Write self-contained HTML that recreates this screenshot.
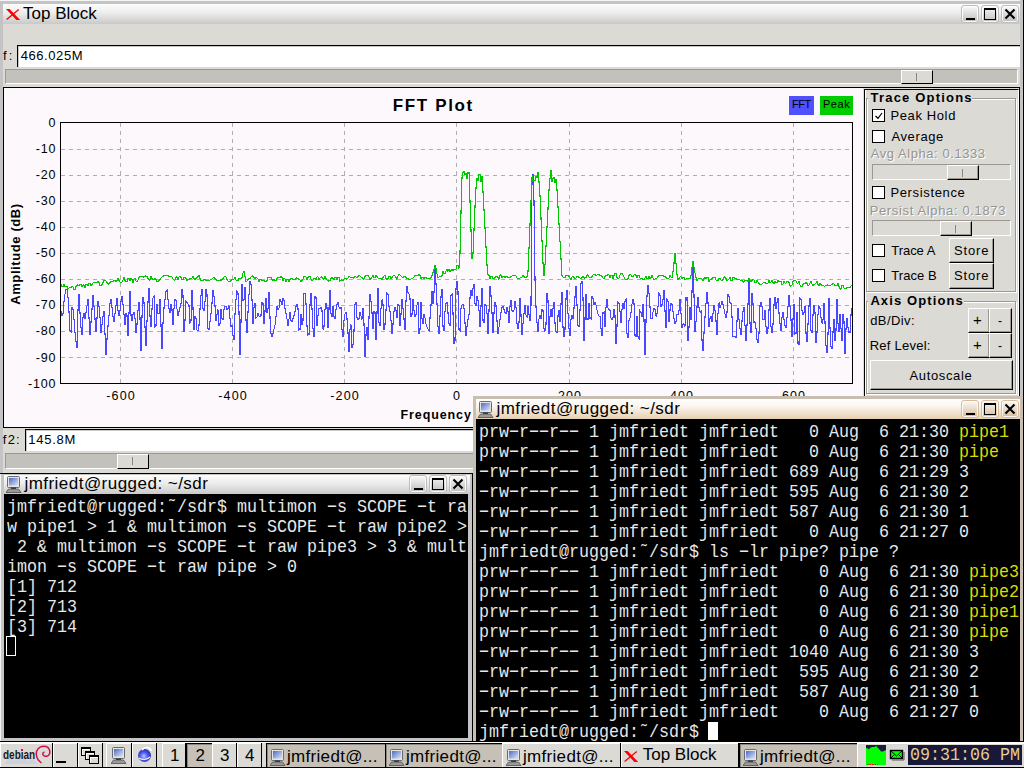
<!DOCTYPE html>
<html><head><meta charset="utf-8">
<style>
*{margin:0;padding:0;box-sizing:border-box}
html,body{width:1024px;height:768px;overflow:hidden;background:#000;font-family:"Liberation Sans",sans-serif}
.a{position:absolute}
.t{position:absolute;white-space:pre;line-height:1;color:#000}
.btn{position:absolute;background:#dcdad5;border:1px solid;border-color:#fff #000 #000 #fff;box-shadow:inset -1px -1px 0 #9a9890}
.chk{position:absolute;width:13px;height:13px;background:#fff;border:1px solid #000}
.grp{position:absolute;border:1px solid #9a9890;box-shadow:inset 1px 1px 0 #fff,1px 1px 0 #fff}
.trough{position:absolute;background:#dcdad5;border:1px solid;border-color:#9a9890 #fff #fff #9a9890}
.tr{position:absolute;background:#c3c1bc;border:1px solid;border-color:#9a9890 #fff #fff #9a9890}
.tl{position:absolute;white-space:pre;line-height:20px;height:20px;color:#e8e8e8;font-family:"Liberation Mono",monospace;font-size:18px;transform:scaleX(0.9259);transform-origin:0 0}
.y{color:#dcdc00}
.wb{position:absolute;border-radius:3px}
</style></head><body>

<div class="a" style="left:0px;top:0px;width:1024px;height:474px;background:#dcdad5"></div>
<div class="a" style="left:0px;top:0px;width:3px;height:474px;background:#c4c4c4"></div>
<div class="a" style="left:0px;top:1px;width:1024px;height:3px;background:#c4c4c4"></div>
<div class="a" style="left:0px;top:0px;width:1024px;height:1px;background:#f4f4f4"></div>
<div class="a" style="left:1020px;top:0px;width:3px;height:474px;background:#c4c4c4"></div>
<div class="a" style="left:1023px;top:0px;width:1px;height:474px;background:#000"></div>
<div class="a" style="left:0px;top:473px;width:1024px;height:1px;background:#000"></div>
<div class="a" style="left:3px;top:4px;width:1017px;height:20px;background:linear-gradient(#fdfdfd,#ececec 45%,#c9c9c9)"></div>
<svg class="a" style="left:5px;top:8px" width="16" height="13"><path d="M1,1 L4.6,1 L15.2,12 L11.4,12 Z" fill="#ff0000"/><path d="M1.6,11.6 L13.8,1.4" stroke="#ff0000" stroke-width="1.3"/></svg>
<div class="t" style="left:23.00px;top:5.21px;font-size:17px;">Top Block</div>
<div class="a" style="left:961px;top:5px;width:18px;height:18px;border:1px solid #bdbdbd;border-radius:3px;background:linear-gradient(#fafafa,#bdbdbd);box-shadow:inset 0 0 0 1px rgba(255,255,255,.85)"></div>
<div class="a" style="left:981px;top:5px;width:18px;height:18px;border:1px solid #bdbdbd;border-radius:3px;background:linear-gradient(#fafafa,#bdbdbd);box-shadow:inset 0 0 0 1px rgba(255,255,255,.85)"></div>
<div class="a" style="left:1001px;top:5px;width:18px;height:18px;border:1px solid #bdbdbd;border-radius:3px;background:linear-gradient(#fafafa,#bdbdbd);box-shadow:inset 0 0 0 1px rgba(255,255,255,.85)"></div>
<div class="a" style="left:966px;top:18px;width:9px;height:2px;background:#000"></div>
<div class="a" style="left:984px;top:8px;width:12px;height:12px;border:1px solid #000;border-top-width:2px"></div>
<svg class="a" style="left:1004px;top:8px" width="12" height="12"><path d="M1.5,1.5 L10.5,10.5 M1.5,10.5 L10.5,1.5" stroke="#000" stroke-width="2.1"/></svg>
<div class="t" style="left:2.92px;top:48.90px;font-size:13px;letter-spacing:2.15px;">f:</div>
<div class="a" style="left:17px;top:45px;width:1003px;height:22px;background:#fff;border-top:1px solid #000;border-left:1px solid #000;box-shadow:inset 1px 1px 0 #c8c8c8"></div>
<div class="t" style="left:20.70px;top:48.90px;font-size:13px;letter-spacing:0.58px;">466.025M</div>
<div class="a" style="left:5px;top:69px;width:1013px;height:15px;background:#c3c1bc;border:1px solid;border-color:#9a9890 #fff #fff #9a9890"></div>
<div class="a" style="left:901px;top:70px;width:32px;height:14px;background:#dcdad5;border:1px solid;border-color:#fff #000 #000 #fff"></div>
<div class="a" style="left:916px;top:73px;width:1px;height:8px;background:#8a8880"></div>
<div class="a" style="left:3px;top:87px;width:1017px;height:341px;background:#dcdad5;border:1px solid #000"></div>
<div class="a" style="left:4px;top:88px;width:859px;height:339px;background:#fcf8fc"></div>
<svg class="a" style="left:0;top:0" width="1024" height="474">
<path d="M61,149.5H852 M61,175.5H852 M61,201.5H852 M61,227.5H852 M61,253.5H852 M61,279.5H852 M61,305.5H852 M61,331.5H852 M61,357.5H852 M120.5,123V383 M232.5,123V383 M344.5,123V383 M456.5,123V383 M569.5,123V383 M681.5,123V383 M793.5,123V383" stroke="#b0b0b0" stroke-width="1" stroke-dasharray="4,4" fill="none" shape-rendering="crispEdges"/>
<path d="M61,310.8 62,315.9 63,313.9 64,301.3 65,294.1 66,289.4 67,289.1 68,297.4 69,311.4 70,330.3 71,331.7 72,306.9 73,309.1 74,319.0 75,332.6 76,341.6 77,347.6 78,309.8 79,294.5 80,312.7 81,327.7 82,335.4 83,317.3 84,313.4 85,319.1 86,312.9 87,306.2 88,298.7 89,317.6 90,335.4 91,322.4 92,308.9 93,294.9 94,306.4 95,318.8 96,332.4 97,317.8 98,301.3 99,305.9 100,317.3 101,333.1 102,324.5 103,316.9 104,310.8 105,333.8 106,354.8 107,338.9 108,326.3 109,315.9 110,303.5 111,299.3 112,307.4 113,316.5 114,322.1 115,313.2 116,305.3 117,298.2 118,310.9 119,316.2 120,310.6 121,301.8 122,295.8 123,304.7 124,314.4 125,324.6 126,313.7 127,315.3 128,335.9 129,313.1 130,291.0 131,315.2 132,321.1 133,314.7 134,312.6 135,317.7 136,333.4 137,324.4 138,310.4 139,301.6 140,317.9 141,351.0 142,316.5 143,297.5 144,301.8 145,326.9 146,346.0 147,321.0 148,302.3 149,288.0 150,316.7 151,326.8 152,309.1 153,297.9 154,296.3 155,326.4 156,325.5 157,303.9 158,313.5 159,313.6 160,299.2 161,325.2 162,348.9 163,323.3 164,308.1 165,299.8 166,291.2 167,289.8 168,299.3 169,308.2 170,313.4 171,303.8 172,309.5 173,325.2 174,308.7 175,299.2 176,300.4 177,308.9 178,316.3 179,311.5 180,307.5 181,304.0 182,289.4 183,295.3 184,331.9 185,320.0 186,301.1 187,302.6 188,304.0 189,305.3 190,322.9 191,321.1 192,290.2 193,308.3 194,329.9 195,316.3 196,318.0 197,330.0 198,331.1 199,325.5 200,309.6 201,295.7 202,289.0 203,308.9 204,311.3 205,301.8 206,288.6 207,294.5 208,329.1 209,329.8 210,322.0 211,313.9 212,303.1 213,290.4 214,296.2 215,305.6 216,320.5 217,314.8 218,309.6 219,326.3 220,323.9 221,308.8 222,318.3 223,319.7 224,309.2 225,306.4 226,306.3 227,309.4 228,308.7 229,305.6 230,318.5 231,326.1 232,325.8 233,335.4 234,339.9 235,314.4 236,299.2 237,291.0 238,293.4 239,311.9 240,354.5 241,321.8 242,283.9 243,300.3 244,299.4 245,287.0 246,320.5 247,332.5 248,312.4 249,294.5 250,281.2 251,283.9 252,299.7 253,324.2 254,307.1 255,302.9 256,318.2 257,316.9 258,313.2 259,316.1 260,316.5 261,315.3 262,302.7 263,303.4 264,323.9 265,311.4 266,297.9 267,313.1 268,309.0 269,292.0 270,317.4 271,333.8 272,336.7 273,333.6 274,329.2 275,325.1 276,316.9 277,306.2 278,309.7 279,308.2 280,299.0 281,301.6 282,304.6 283,298.2 284,300.3 285,308.2 286,313.4 287,319.1 288,325.7 289,318.9 290,312.5 291,320.7 292,321.9 293,318.5 294,315.8 295,311.9 296,306.4 297,304.4 298,307.9 299,329.9 300,329.3 301,313.7 302,324.5 303,320.3 304,293.4 305,293.3 306,303.2 307,325.9 308,335.0 309,334.9 310,305.0 311,293.3 312,309.1 313,328.6 314,337.0 315,296.7 316,297.5 317,325.7 318,315.1 319,308.6 320,308.4 321,307.5 322,310.5 323,329.4 324,326.7 325,309.6 326,303.0 327,307.3 328,328.0 329,308.6 330,289.8 331,313.6 332,316.9 333,306.5 334,316.4 335,318.6 336,309.6 337,304.7 338,302.5 339,307.2 340,308.5 341,307.5 342,329.7 343,336.5 344,320.2 345,313.8 346,312.0 347,318.6 348,332.8 349,352.0 350,329.0 351,324.6 352,348.3 353,344.8 354,331.3 355,304.4 356,302.7 357,317.9 358,319.8 359,318.4 360,312.0 361,316.2 362,319.4 363,308.1 364,323.6 365,357.0 366,334.9 367,327.0 368,340.3 369,317.9 370,294.2 371,300.8 372,312.9 373,328.7 374,311.6 375,312.5 376,340.4 377,313.3 378,287.7 379,322.9 380,326.2 381,308.3 382,299.6 383,304.5 384,329.7 385,324.3 386,310.4 387,293.0 388,293.8 389,306.7 390,311.4 391,319.9 392,334.2 393,324.3 394,311.0 395,307.5 396,310.5 397,317.8 398,304.5 399,305.1 400,326.4 401,313.9 402,298.9 403,308.3 404,318.8 405,330.1 406,301.3 407,286.4 408,292.4 409,294.1 410,298.2 411,316.6 412,314.5 413,298.8 414,310.6 415,316.9 416,314.8 417,304.9 418,301.9 419,334.0 420,330.2 421,302.5 422,318.4 423,324.1 424,314.4 425,318.0 426,324.1 427,326.8 428,329.1 429,331.1 430,318.5 431,305.1 432,290.6 433,303.6 434,292.7 435,268.9 436,283.4 437,303.4 438,326.8 439,333.9 440,316.3 441,296.9 442,288.6 443,326.7 444,330.6 445,311.5 446,303.2 447,302.4 448,312.9 449,323.6 450,326.0 451,295.3 452,294.2 453,313.0 454,343.6 455,341.0 456,288.5 457,281.2 458,292.0 459,329.7 460,331.1 461,308.2 462,305.1 463,304.6 464,308.1 465,323.2 466,335.8 467,326.5 468,319.8 469,314.8 470,298.1 471,290.3 472,295.5 473,288.3 474,284.0 475,303.8 476,306.0 477,296.4 478,300.7 479,310.1 480,327.2 481,306.2 482,288.3 483,320.8 484,323.0 485,305.0 486,304.9 487,313.1 488,333.6 489,310.9 490,286.0 491,295.8 492,312.4 493,333.3 494,313.1 495,302.3 496,305.6 497,321.0 498,334.2 499,327.1 500,320.0 501,312.8 502,307.5 503,305.9 504,309.7 505,312.7 506,313.6 507,307.0 508,311.5 509,323.3 510,306.5 511,300.4 512,310.4 513,312.1 514,310.1 515,301.3 516,307.4 517,323.3 518,329.3 519,322.8 520,297.7 521,315.2 522,335.4 523,323.7 524,313.6 525,304.6 526,315.1 527,317.2 528,306.4 529,314.2 530,320.9 531,304.8 532,180.6 533,174.1 534,201.3 535,279.4 536,307.4 537,322.1 538,331.7 539,318.8 540,315.7 541,319.2 542,309.1 543,310.3 544,328.4 545,331.4 546,324.5 547,293.2 548,300.5 549,333.6 550,316.3 551,309.1 552,317.0 553,308.4 554,302.4 555,323.3 556,332.0 557,332.6 558,315.9 559,310.5 560,321.9 561,304.3 562,291.7 563,327.6 564,337.3 565,329.4 566,298.9 567,290.0 568,313.5 569,328.6 570,335.8 571,319.6 572,315.4 573,319.1 574,308.2 575,297.2 576,286.2 577,304.7 578,325.6 579,326.7 580,310.6 581,283.0 582,281.5 583,297.9 584,340.9 585,319.3 586,294.1 587,319.6 588,319.7 589,302.9 590,318.7 591,319.0 592,295.8 593,298.3 594,304.9 595,302.4 596,304.7 597,310.2 598,313.8 599,316.1 600,316.6 601,328.6 602,335.8 603,312.5 604,312.0 605,326.7 606,307.5 607,299.5 608,308.2 609,309.6 610,310.7 611,318.2 612,319.7 613,317.4 614,309.3 615,315.7 616,343.9 617,326.0 618,302.6 619,303.5 620,311.2 621,323.4 622,309.5 623,303.3 624,308.6 625,300.8 626,299.0 627,334.0 628,337.7 629,320.5 630,318.0 631,312.9 632,304.1 633,299.3 634,302.9 635,335.8 636,336.7 637,316.3 638,337.0 639,338.5 640,311.2 641,312.7 642,317.1 643,304.2 644,319.9 645,354.6 646,321.0 647,296.3 648,284.9 649,293.6 650,306.8 651,318.2 652,318.7 653,311.9 654,308.6 655,309.4 656,316.4 657,313.6 658,306.7 659,293.3 660,294.9 661,306.4 662,304.5 663,299.5 664,289.9 665,311.1 666,328.4 667,299.7 668,301.0 669,322.2 670,309.9 671,303.1 672,304.6 673,311.3 674,318.7 675,323.9 676,321.7 677,314.3 678,314.6 679,310.3 680,299.4 681,313.1 682,328.2 683,324.1 684,324.0 685,326.4 686,297.8 687,297.9 688,340.9 689,327.1 690,307.3 691,320.2 692,292.1 693,266.4 694,295.4 695,331.9 696,321.7 697,307.0 698,296.6 699,307.9 700,311.9 701,310.9 702,340.3 703,350.8 704,332.9 705,317.5 706,303.4 707,292.4 708,302.4 709,326.5 710,318.7 711,316.3 712,322.1 713,313.5 714,304.8 715,310.1 716,320.7 717,335.0 718,313.4 719,302.6 720,308.0 721,304.9 722,301.3 723,304.4 724,308.8 725,314.0 726,317.4 727,312.4 728,294.6 729,296.6 730,302.4 731,303.5 732,316.2 733,336.6 734,336.8 735,337.0 736,337.0 737,321.1 738,307.6 739,319.8 740,328.4 741,334.6 742,321.2 743,311.4 744,306.7 745,325.2 746,341.3 747,325.3 748,304.5 749,280.7 750,323.4 751,332.9 752,292.7 753,303.5 754,322.3 755,321.9 756,328.4 757,339.6 758,343.1 759,333.9 760,305.8 761,302.0 762,306.5 763,319.8 764,319.6 765,310.3 766,326.4 767,334.0 768,328.7 769,309.7 770,297.6 771,327.0 772,333.3 773,324.1 774,304.7 775,297.4 776,308.5 777,302.7 778,297.7 779,313.1 780,323.7 781,331.2 782,317.2 783,311.8 784,319.5 785,325.3 786,327.5 787,317.4 788,306.7 789,295.4 790,306.5 791,320.1 792,337.2 793,319.3 794,304.0 795,334.0 796,333.4 797,312.2 798,344.0 799,344.5 800,298.4 801,299.5 802,310.5 803,314.5 804,312.3 805,305.9 806,333.2 807,342.2 808,323.8 809,305.8 810,298.1 811,330.9 812,333.1 813,315.0 814,305.5 815,312.1 816,343.0 817,332.5 818,314.2 819,305.9 820,308.1 821,317.2 822,323.4 823,320.3 824,303.1 825,322.0 826,345.7 827,352.9 828,334.1 829,298.2 830,328.2 831,347.0 832,348.7 833,331.7 834,318.9 835,340.8 836,330.6 837,299.0 838,323.8 839,331.5 840,313.8 841,328.4 842,341.1 843,313.7 844,321.8 845,353.5 846,328.8 847,318.0 848,327.8 849,332.8 850,332.3 851,314.7 852,307.6" stroke="#4848ff" stroke-width="1.1" fill="none" shape-rendering="crispEdges"/>
<path d="M61,284.2 62,286.9 63,286.9 64,284.2 65,286.7 66,286.8 67,286.5 68,288.7 69,287.9 70,287.8 71,287.2 72,286.9 73,286.8 74,289.4 75,289.3 76,286.5 77,285.1 78,284.9 79,285.8 80,284.3 81,284.5 82,286.3 83,284.8 84,285.5 85,288.2 86,284.7 87,283.9 88,285.7 89,283.7 90,283.7 91,286.0 92,284.5 93,283.2 94,282.0 95,282.4 96,282.8 97,283.0 98,281.3 99,282.3 100,285.9 101,285.7 102,284.5 103,282.4 104,280.5 105,280.0 106,281.0 107,282.5 108,283.5 109,284.2 110,282.6 111,281.6 112,281.3 113,281.2 114,280.7 115,279.9 116,281.3 117,280.7 118,278.0 119,280.5 120,282.1 121,282.9 122,281.8 123,279.9 124,277.3 125,280.6 126,282.0 127,281.4 128,278.6 129,278.3 130,280.8 131,278.6 132,279.2 133,282.6 134,278.9 135,278.4 136,281.2 137,281.4 138,280.2 139,277.7 140,276.6 141,276.1 142,276.1 143,277.0 144,277.0 145,276.3 146,275.9 147,276.6 148,278.4 149,280.2 150,279.5 151,276.4 152,278.3 153,279.4 154,279.7 155,278.8 156,279.3 157,281.3 158,281.3 159,280.8 160,279.6 161,278.2 162,277.0 163,276.3 164,275.4 165,275.2 166,275.7 167,275.1 168,275.5 169,276.7 170,276.2 171,276.3 172,276.9 173,279.0 174,280.1 175,280.1 176,277.1 177,276.8 178,279.3 179,276.8 180,276.2 181,277.7 182,279.7 183,279.5 184,277.1 185,277.6 186,278.7 187,280.3 188,279.5 189,279.1 190,278.9 191,278.7 192,277.9 193,276.4 194,278.7 195,279.3 196,278.2 197,277.5 198,276.4 199,275.0 200,278.6 201,280.5 202,280.7 203,280.2 204,279.9 205,279.8 206,280.1 207,280.4 208,280.8 209,280.3 210,280.0 211,279.9 212,278.9 213,278.0 214,277.3 215,278.5 216,279.6 217,280.5 218,280.8 219,280.6 220,279.9 221,280.3 222,279.9 223,278.6 224,276.9 225,276.4 226,277.1 227,279.4 228,280.9 229,281.6 230,281.5 231,280.7 232,279.1 233,279.4 234,278.9 235,277.6 236,280.2 237,281.1 238,280.4 239,278.6 240,277.9 241,278.4 242,277.4 243,273.0 244,271.2 245,276.4 246,281.3 247,281.0 248,279.4 249,278.7 250,278.6 251,276.9 252,276.0 253,276.1 254,277.8 255,278.3 256,277.6 257,277.9 258,279.2 259,281.7 260,279.7 261,279.3 262,280.6 263,280.3 264,280.6 265,281.5 266,282.1 267,280.6 268,276.9 269,277.5 270,277.7 271,277.6 272,279.5 273,280.3 274,279.7 275,280.7 276,280.3 277,278.4 278,277.4 279,277.0 280,277.2 281,276.6 282,277.7 283,280.6 284,278.6 285,278.9 286,281.4 287,279.6 288,279.6 289,281.5 290,279.6 291,278.6 292,278.6 293,279.4 294,279.8 295,279.8 296,278.2 297,277.9 298,278.9 299,279.2 300,280.0 301,281.3 302,280.5 303,278.9 304,276.5 305,275.9 306,276.9 307,279.5 308,277.3 309,276.2 310,276.2 311,279.0 312,280.3 313,280.1 314,278.2 315,278.1 316,279.8 317,277.0 318,276.8 319,279.4 320,277.8 321,277.0 322,277.1 323,279.2 324,278.9 325,276.0 326,278.3 327,280.0 328,280.9 329,281.1 330,280.4 331,278.6 332,277.8 333,278.2 334,279.8 335,277.3 336,277.3 337,279.7 338,277.2 339,277.7 340,281.2 341,280.2 342,279.9 343,280.4 344,279.1 345,278.7 346,279.1 347,278.9 348,277.8 349,275.8 350,276.9 351,277.5 352,277.3 353,278.2 354,277.8 355,275.9 356,277.2 357,277.3 358,276.2 359,275.5 360,275.8 361,277.0 362,277.8 363,278.5 364,279.2 365,276.4 366,275.3 367,275.9 368,275.7 369,276.9 370,279.3 371,278.4 372,276.9 373,275.0 374,277.7 375,277.8 376,275.3 377,276.5 378,277.8 379,279.1 380,278.4 381,278.7 382,280.0 383,277.4 384,275.9 385,275.7 386,278.7 387,279.6 388,278.4 389,276.3 390,276.5 391,278.9 392,277.4 393,276.1 394,274.9 395,275.9 396,277.4 397,279.3 398,275.8 399,274.5 400,275.1 401,275.9 402,276.8 403,277.8 404,276.7 405,276.5 406,277.3 407,278.5 408,279.0 409,279.0 410,279.3 411,279.1 412,278.6 413,278.2 414,277.2 415,275.5 416,275.7 417,275.8 418,275.7 419,274.7 420,275.7 421,278.8 422,277.5 423,277.5 424,278.9 425,277.4 426,277.3 427,278.8 428,278.8 429,278.7 430,278.5 431,277.3 432,275.8 433,272.4 434,269.5 435,265.1 436,268.7 437,274.1 438,277.4 439,277.1 440,276.0 441,276.4 442,275.5 443,271.2 444,273.5 445,273.4 446,270.8 447,269.5 448,271.3 449,269.2 450,271.6 451,270.7 452,269.1 453,270.4 454,269.8 455,269.8 456,268.9 457,265.5 458,265.3 459,268.4 460,253.3 461,212.4 462,177.0 463,172.5 464,171.0 465,174.9 466,173.0 467,179.3 468,172.7 469,172.4 470,201.3 471,229.9 472,258.6 473,253.3 474,229.9 475,206.6 476,188.0 477,178.5 478,181.3 479,174.1 480,174.3 481,182.4 482,176.1 483,191.2 484,209.6 485,228.1 486,246.5 487,264.9 488,274.6 489,275.4 490,279.0 491,276.7 492,276.6 493,278.9 494,278.3 495,277.5 496,276.5 497,276.5 498,277.4 499,279.3 500,275.3 501,274.9 502,278.0 503,276.4 504,276.4 505,278.1 506,276.5 507,276.2 508,277.3 509,277.4 510,277.2 511,276.5 512,276.0 513,275.8 514,275.7 515,275.3 516,276.1 517,277.9 518,278.7 519,278.7 520,278.0 521,277.7 522,276.9 523,275.7 524,276.6 525,277.2 526,277.7 527,276.8 528,271.6 529,248.3 530,225.0 531,201.7 532,176.6 533,181.1 534,179.9 535,181.1 536,176.6 537,177.4 538,171.6 539,181.8 540,195.4 541,218.0 542,240.6 543,263.2 544,275.6 545,264.8 546,246.1 547,227.5 548,208.8 549,190.1 550,178.8 551,169.8 552,181.5 553,178.7 554,177.3 555,182.4 556,179.0 557,189.9 558,207.0 559,224.1 560,241.2 561,258.3 562,275.4 563,276.8 564,277.8 565,277.4 566,275.7 567,275.0 568,275.3 569,276.6 570,278.1 571,279.9 572,277.2 573,276.3 574,277.4 575,278.6 576,278.1 577,275.9 578,276.7 579,277.4 580,278.0 581,278.2 582,277.7 583,276.6 584,277.8 585,278.1 586,277.4 587,275.1 588,274.9 589,276.9 590,277.9 591,277.8 592,276.6 593,274.9 594,274.1 595,274.4 596,275.2 597,275.1 598,274.2 599,274.8 600,275.2 601,275.6 602,276.7 603,277.8 604,279.0 605,276.5 606,275.5 607,275.9 608,274.4 609,275.1 610,277.9 611,275.5 612,275.7 613,278.6 614,275.4 615,273.7 616,273.5 617,277.6 618,279.1 619,277.9 620,275.0 621,273.6 622,273.7 623,275.0 624,276.8 625,279.1 626,279.7 627,279.4 628,278.4 629,275.4 630,274.2 631,274.8 632,276.4 633,276.5 634,275.1 635,274.4 636,275.4 637,278.1 638,275.6 639,275.6 640,278.2 641,278.0 642,278.5 643,279.8 644,279.3 645,278.2 646,276.5 647,278.9 648,278.9 649,276.6 650,278.3 651,277.9 652,275.4 653,278.1 654,279.3 655,279.0 656,278.7 657,277.9 658,276.6 659,275.6 660,275.3 661,275.6 662,275.6 663,275.8 664,276.1 665,276.7 666,277.5 667,278.4 668,279.1 669,278.0 670,275.0 671,277.0 672,277.5 673,271.8 674,263.3 675,252.8 676,263.1 677,274.2 678,279.6 679,278.5 680,276.9 681,277.0 682,278.7 683,277.2 684,277.7 685,280.2 686,279.1 687,278.5 688,278.4 689,278.0 690,278.4 691,275.9 692,267.7 693,261.1 694,266.9 695,272.8 696,277.6 697,281.0 698,279.1 699,278.4 700,279.1 701,278.1 702,278.8 703,281.0 704,278.2 705,277.6 706,279.0 707,276.8 708,277.7 709,281.8 710,280.1 711,279.2 712,278.9 713,277.5 714,277.0 715,277.4 716,279.9 717,280.9 718,280.5 719,278.7 720,278.5 721,279.9 722,280.7 723,279.6 724,276.8 725,277.3 726,278.6 727,280.7 728,280.0 729,278.8 730,277.2 731,280.4 732,280.5 733,277.5 734,277.7 735,278.2 736,278.9 737,279.2 738,279.3 739,279.4 740,280.1 741,280.3 742,280.2 743,282.0 744,282.1 745,280.6 746,280.2 747,280.4 748,281.3 749,278.1 750,280.6 751,281.6 752,280.2 753,279.7 754,280.1 755,282.9 756,282.9 757,280.0 758,282.2 759,283.7 760,284.7 761,284.5 762,284.1 763,283.2 764,282.4 765,282.4 766,283.3 767,283.9 768,283.0 769,280.6 770,282.3 771,282.2 772,280.0 773,282.8 774,283.3 775,281.4 776,282.8 777,282.5 778,280.5 779,281.4 780,281.8 781,281.7 782,284.3 783,284.2 784,281.4 785,283.1 786,283.2 787,281.6 788,281.1 789,282.5 790,285.7 791,286.2 792,284.9 793,281.7 794,280.8 795,280.6 796,280.9 797,283.0 798,283.2 799,281.5 800,285.0 801,286.7 802,286.6 803,284.4 804,283.4 805,283.7 806,282.5 807,283.2 808,285.8 809,284.8 810,283.2 811,281.0 812,284.0 813,285.3 814,284.9 815,284.1 816,282.8 817,281.2 818,284.8 819,285.5 820,283.3 821,284.6 822,285.3 823,285.4 824,286.1 825,286.1 826,285.3 827,284.9 828,285.1 829,286.0 830,285.6 831,285.1 832,284.6 833,283.8 834,284.0 835,285.4 836,286.2 837,285.4 838,283.0 839,286.5 840,288.6 841,289.2 842,285.6 843,285.2 844,288.0 845,288.6 846,288.4 847,287.5 848,287.8 849,287.9 850,287.9 851,285.9 852,284.9" stroke="#00c800" stroke-width="1.1" fill="none" shape-rendering="crispEdges"/>
<rect x="60.5" y="122.5" width="792" height="261" fill="none" stroke="#000" stroke-width="1" shape-rendering="crispEdges"/>
</svg>
<div class="t" style="left:392.86px;top:96.61px;font-size:17px;font-weight:bold;letter-spacing:1.62px;">FFT Plot</div>
<div class="a" style="left:789px;top:96px;width:25px;height:19px;background:#5050ff"></div>
<div class="t" style="left:792.10px;top:99.39px;font-size:11px;letter-spacing:-0.50px;">FFT</div>
<div class="a" style="left:820px;top:96px;width:33px;height:19px;background:#00cc00"></div>
<div class="t" style="left:822.90px;top:99.39px;font-size:11px;letter-spacing:0.60px;">Peak</div>
<div class="t" style="left:48.55px;top:116.62px;font-size:12.5px;letter-spacing:0.8px">0</div>
<div class="t" style="left:35.83px;top:142.72px;font-size:12.5px;letter-spacing:0.8px">-10</div>
<div class="t" style="left:35.83px;top:168.82px;font-size:12.5px;letter-spacing:0.8px">-20</div>
<div class="t" style="left:35.83px;top:194.92px;font-size:12.5px;letter-spacing:0.8px">-30</div>
<div class="t" style="left:35.83px;top:221.02px;font-size:12.5px;letter-spacing:0.8px">-40</div>
<div class="t" style="left:35.83px;top:247.12px;font-size:12.5px;letter-spacing:0.8px">-50</div>
<div class="t" style="left:35.83px;top:273.22px;font-size:12.5px;letter-spacing:0.8px">-60</div>
<div class="t" style="left:35.83px;top:299.32px;font-size:12.5px;letter-spacing:0.8px">-70</div>
<div class="t" style="left:35.83px;top:325.42px;font-size:12.5px;letter-spacing:0.8px">-80</div>
<div class="t" style="left:35.83px;top:351.52px;font-size:12.5px;letter-spacing:0.8px">-90</div>
<div class="t" style="left:28.08px;top:377.62px;font-size:12.5px;letter-spacing:0.8px">-100</div>
<div class="t" style="left:106.34px;top:390.42px;font-size:12.5px;letter-spacing:1.1px">-600</div>
<div class="t" style="left:218.34px;top:390.42px;font-size:12.5px;letter-spacing:1.1px">-400</div>
<div class="t" style="left:330.34px;top:390.42px;font-size:12.5px;letter-spacing:1.1px">-200</div>
<div class="t" style="left:453.02px;top:390.42px;font-size:12.5px;letter-spacing:1.1px">0</div>
<div class="t" style="left:557.97px;top:390.42px;font-size:12.5px;letter-spacing:1.1px">200</div>
<div class="t" style="left:669.97px;top:390.42px;font-size:12.5px;letter-spacing:1.1px">400</div>
<div class="t" style="left:781.97px;top:390.42px;font-size:12.5px;letter-spacing:1.1px">600</div>
<div class="t" style="left:400.50px;top:408.82px;font-size:12.5px;font-weight:bold;letter-spacing:0.9px">Frequency (kHz)</div>
<div class="t" style="left:-36px;top:247px;width:104px;height:14px;text-align:center;font-size:13px;font-weight:bold;letter-spacing:0.6px;transform:rotate(-90deg)">Amplitude (dB)</div>
<div class="a" style="left:864px;top:89px;width:155px;height:338px;border-top:1px solid #000;border-left:1px solid #000;border-right:1px solid #fff;border-bottom:1px solid #fff"></div>
<div class="a" style="left:865px;top:90px;width:1px;height:336px;background:#fff"></div>
<div class="grp" style="left:866px;top:98px;width:150px;height:194px"></div>
<div class="a" style="left:868px;top:90px;width:104px;height:12px;background:#dcdad5"></div>
<div class="t" style="left:870.55px;top:90.90px;font-size:13px;font-weight:bold;letter-spacing:1.19px;">Trace Options</div>
<div class="chk" style="left:872px;top:109px"><svg width="11" height="11" style="position:absolute;left:0;top:0"><path d="M2.5,6 L5,8.3 L9,3" stroke="#000" stroke-width="1.2" fill="none"/></svg></div>
<div class="t" style="left:890.43px;top:108.80px;font-size:13px;letter-spacing:0.62px;">Peak Hold</div>
<div class="chk" style="left:872px;top:130px"></div>
<div class="t" style="left:891.47px;top:129.80px;font-size:13px;letter-spacing:0.61px;">Average</div>
<div class="t" style="left:870.67px;top:147.40px;font-size:13px;color:#96948e;letter-spacing:0.57px;text-shadow:1px 1px 0 #fff">Avg Alpha: 0.1333</div>
<div class="trough" style="left:872px;top:164px;width:139px;height:16px"></div>
<div class="btn" style="left:947px;top:165px;width:32px;height:15px"></div>
<div class="a" style="left:962px;top:169px;width:1px;height:8px;background:#8a8880"></div>
<div class="chk" style="left:872px;top:186px"></div>
<div class="t" style="left:890.43px;top:185.80px;font-size:13px;letter-spacing:0.65px;">Persistence</div>
<div class="t" style="left:869.63px;top:203.80px;font-size:13px;color:#96948e;letter-spacing:0.65px;text-shadow:1px 1px 0 #fff">Persist Alpha: 0.1873</div>
<div class="trough" style="left:872px;top:220px;width:139px;height:16px"></div>
<div class="btn" style="left:940px;top:221px;width:32px;height:15px"></div>
<div class="a" style="left:955px;top:225px;width:1px;height:8px;background:#8a8880"></div>
<div class="chk" style="left:872px;top:244px"></div>
<div class="t" style="left:891.21px;top:243.80px;font-size:13px;letter-spacing:-0.03px;">Trace A</div>
<div class="btn" style="left:949px;top:238px;width:45px;height:25px"></div>
<div class="t" style="left:953.91px;top:244.00px;font-size:13px;letter-spacing:0.90px;">Store</div>
<div class="chk" style="left:872px;top:269px"></div>
<div class="t" style="left:891.21px;top:268.80px;font-size:13px;letter-spacing:0.08px;">Trace B</div>
<div class="btn" style="left:949px;top:263px;width:45px;height:26px"></div>
<div class="t" style="left:953.91px;top:269.00px;font-size:13px;letter-spacing:0.90px;">Store</div>
<div class="grp" style="left:866px;top:301px;width:150px;height:93px"></div>
<div class="a" style="left:868px;top:293px;width:96px;height:12px;background:#dcdad5"></div>
<div class="t" style="left:870.38px;top:293.80px;font-size:13px;font-weight:bold;letter-spacing:1.11px;">Axis Options</div>
<div class="t" style="left:870.15px;top:313.50px;font-size:13px;letter-spacing:0.42px;">dB/Div:</div>
<div class="btn" style="left:968px;top:308px;width:22px;height:25px"></div>
<div class="btn" style="left:989px;top:308px;width:23px;height:25px"></div>
<div class="t" style="left:973.00px;top:312.30px;font-size:15px;">+</div>
<div class="t" style="left:998.00px;top:314.84px;font-size:12px;">-</div>
<div class="t" style="left:869.63px;top:338.50px;font-size:13px;letter-spacing:0.25px;">Ref Level:</div>
<div class="btn" style="left:968px;top:333px;width:22px;height:25px"></div>
<div class="btn" style="left:989px;top:333px;width:23px;height:25px"></div>
<div class="t" style="left:973.00px;top:337.30px;font-size:15px;">+</div>
<div class="t" style="left:998.00px;top:339.84px;font-size:12px;">-</div>
<div class="btn" style="left:870px;top:360px;width:143px;height:30px"></div>
<div class="t" style="left:909.47px;top:369.00px;font-size:13px;letter-spacing:0.65px;">Autoscale</div>
<div class="t" style="left:2.82px;top:432.90px;font-size:13px;letter-spacing:1.21px;">f2:</div>
<div class="a" style="left:25px;top:429px;width:995px;height:22px;background:#fff;border-top:1px solid #000;border-left:1px solid #000;box-shadow:inset 1px 1px 0 #c8c8c8"></div>
<div class="t" style="left:28.31px;top:432.90px;font-size:13px;letter-spacing:0.74px;">145.8M</div>
<div class="a" style="left:5px;top:453px;width:1013px;height:16px;background:#c3c1bc;border:1px solid;border-color:#9a9890 #fff #fff #9a9890"></div>
<div class="a" style="left:117px;top:454px;width:32px;height:15px;background:#dcdad5;border:1px solid;border-color:#fff #000 #000 #fff"></div>
<div class="a" style="left:132px;top:457px;width:1px;height:8px;background:#8a8880"></div>
<div class="a" style="left:0px;top:474px;width:472px;height:268px;background:#c4c4c4;border-left:1px solid #f4f4f4"></div>
<div class="a" style="left:4px;top:475px;width:466px;height:19px;background:linear-gradient(#fdfdfd,#ececec 45%,#c9c9c9)"></div>
<svg class="a" style="left:6px;top:476px" width="16" height="17"><defs><linearGradient id="mg1" x1="0" y1="0" x2="1" y2="1"><stop offset="0" stop-color="#4a6cc8"/><stop offset="1" stop-color="#dde6f6"/></linearGradient></defs><rect x="1.5" y="0.5" width="12" height="11" rx="1" fill="#e4e4e4" stroke="#6a6a6a"/><rect x="3" y="2" width="9" height="7.5" fill="url(#mg1)"/><rect x="5" y="11.5" width="5" height="1.5" fill="#303030"/><path d="M2.5,13 H12.5 L15,16.5 H0 Z" fill="#9a9a9a" stroke="#505050" stroke-width="0.8"/></svg>
<div class="t" style="left:24.42px;top:474.91px;font-size:17px;letter-spacing:0.47px;">jmfriedt@rugged: ~/sdr</div>
<div class="a" style="left:409px;top:475px;width:18px;height:18px;border:1px solid #bdbdbd;border-radius:3px;background:linear-gradient(#fafafa,#bdbdbd);box-shadow:inset 0 0 0 1px rgba(255,255,255,.85)"></div>
<div class="a" style="left:429px;top:475px;width:18px;height:18px;border:1px solid #bdbdbd;border-radius:3px;background:linear-gradient(#fafafa,#bdbdbd);box-shadow:inset 0 0 0 1px rgba(255,255,255,.85)"></div>
<div class="a" style="left:449px;top:475px;width:18px;height:18px;border:1px solid #bdbdbd;border-radius:3px;background:linear-gradient(#fafafa,#bdbdbd);box-shadow:inset 0 0 0 1px rgba(255,255,255,.85)"></div>
<div class="a" style="left:414px;top:488px;width:9px;height:2px;background:#000"></div>
<div class="a" style="left:432px;top:478px;width:12px;height:12px;border:1px solid #000;border-top-width:2px"></div>
<svg class="a" style="left:452px;top:478px" width="12" height="12"><path d="M1.5,1.5 L10.5,10.5 M1.5,10.5 L10.5,1.5" stroke="#000" stroke-width="2.1"/></svg>
<div class="a" style="left:4px;top:494px;width:464px;height:244px;background:#000"></div>
<div class="tl" style="left:7px;top:496.71px">jmfriedt@rugged:˜/sdr$ multimon −s SCOPE −t ra</div>
<div class="tl" style="left:7px;top:516.71px">w pipe1 &gt; 1 &amp; multimon −s SCOPE −t raw pipe2 &gt;</div>
<div class="tl" style="left:7px;top:536.71px"> 2 &amp; multimon −s SCOPE −t raw pipe3 &gt; 3 &amp; mult</div>
<div class="tl" style="left:7px;top:556.71px">imon −s SCOPE −t raw pipe &gt; 0</div>
<div class="tl" style="left:7px;top:576.71px">[1] 712</div>
<div class="tl" style="left:7px;top:596.71px">[2] 713</div>
<div class="tl" style="left:7px;top:616.71px">[3] 714</div>
<div class="a" style="left:6px;top:636px;width:10px;height:20px;border:1px solid #fff"></div>
<div class="a" style="left:0px;top:741px;width:472px;height:1px;background:#000"></div>
<div class="a" style="left:473px;top:396px;width:551px;height:346px;background:#c8bfb2"></div>
<div class="a" style="left:1023px;top:396px;width:1px;height:346px;background:#000"></div>
<div class="a" style="left:476px;top:399px;width:544px;height:20px;background:linear-gradient(#ffffff,#fbf6ef 35%,#e6cfb0)"></div>
<svg class="a" style="left:478px;top:401px" width="16" height="17"><defs><linearGradient id="mg2" x1="0" y1="0" x2="1" y2="1"><stop offset="0" stop-color="#4a6cc8"/><stop offset="1" stop-color="#dde6f6"/></linearGradient></defs><rect x="1.5" y="0.5" width="12" height="11" rx="1" fill="#e4e4e4" stroke="#6a6a6a"/><rect x="3" y="2" width="9" height="7.5" fill="url(#mg2)"/><rect x="5" y="11.5" width="5" height="1.5" fill="#303030"/><path d="M2.5,13 H12.5 L15,16.5 H0 Z" fill="#9a9a9a" stroke="#505050" stroke-width="0.8"/></svg>
<div class="t" style="left:496.42px;top:400.11px;font-size:17px;letter-spacing:0.47px;">jmfriedt@rugged: ~/sdr</div>
<div class="a" style="left:961px;top:400px;width:18px;height:18px;border:1px solid #d8bc98;border-radius:3px;background:linear-gradient(#fafafa,#d8bc98);box-shadow:inset 0 0 0 1px rgba(255,255,255,.85)"></div>
<div class="a" style="left:981px;top:400px;width:18px;height:18px;border:1px solid #d8bc98;border-radius:3px;background:linear-gradient(#fafafa,#d8bc98);box-shadow:inset 0 0 0 1px rgba(255,255,255,.85)"></div>
<div class="a" style="left:1001px;top:400px;width:18px;height:18px;border:1px solid #d8bc98;border-radius:3px;background:linear-gradient(#fafafa,#d8bc98);box-shadow:inset 0 0 0 1px rgba(255,255,255,.85)"></div>
<div class="a" style="left:966px;top:413px;width:9px;height:2px;background:#000"></div>
<div class="a" style="left:984px;top:403px;width:12px;height:12px;border:1px solid #000;border-top-width:2px"></div>
<svg class="a" style="left:1004px;top:403px" width="12" height="12"><path d="M1.5,1.5 L10.5,10.5 M1.5,10.5 L10.5,1.5" stroke="#000" stroke-width="2.1"/></svg>
<div class="a" style="left:476px;top:419px;width:544px;height:323px;background:#000"></div>
<div class="tl" style="left:479px;top:422.21px">prw−r−−r−− 1 jmfriedt jmfriedt   0 Aug  6 21:30 <span class="y">pipe1</span></div>
<div class="tl" style="left:479px;top:442.21px">prw−r−−r−− 1 jmfriedt jmfriedt   0 Aug  6 21:30 <span class="y">pipe</span></div>
<div class="tl" style="left:479px;top:462.21px">−rw−r−−r−− 1 jmfriedt jmfriedt 689 Aug  6 21:29 3</div>
<div class="tl" style="left:479px;top:482.21px">−rw−r−−r−− 1 jmfriedt jmfriedt 595 Aug  6 21:30 2</div>
<div class="tl" style="left:479px;top:502.21px">−rw−r−−r−− 1 jmfriedt jmfriedt 587 Aug  6 21:30 1</div>
<div class="tl" style="left:479px;top:522.21px">−rw−r−−r−− 1 jmfriedt jmfriedt   0 Aug  6 21:27 0</div>
<div class="tl" style="left:479px;top:542.21px">jmfriedt@rugged:˜/sdr$ ls −lr pipe? pipe ?</div>
<div class="tl" style="left:479px;top:562.21px">prw−r−−r−− 1 jmfriedt jmfriedt    0 Aug  6 21:30 <span class="y">pipe3</span></div>
<div class="tl" style="left:479px;top:582.21px">prw−r−−r−− 1 jmfriedt jmfriedt    0 Aug  6 21:30 <span class="y">pipe2</span></div>
<div class="tl" style="left:479px;top:602.21px">prw−r−−r−− 1 jmfriedt jmfriedt    0 Aug  6 21:30 <span class="y">pipe1</span></div>
<div class="tl" style="left:479px;top:622.21px">prw−r−−r−− 1 jmfriedt jmfriedt    0 Aug  6 21:30 <span class="y">pipe</span></div>
<div class="tl" style="left:479px;top:642.21px">−rw−r−−r−− 1 jmfriedt jmfriedt 1040 Aug  6 21:30 3</div>
<div class="tl" style="left:479px;top:662.21px">−rw−r−−r−− 1 jmfriedt jmfriedt  595 Aug  6 21:30 2</div>
<div class="tl" style="left:479px;top:682.21px">−rw−r−−r−− 1 jmfriedt jmfriedt  587 Aug  6 21:30 1</div>
<div class="tl" style="left:479px;top:702.21px">−rw−r−−r−− 1 jmfriedt jmfriedt    0 Aug  6 21:27 0</div>
<div class="tl" style="left:479px;top:722.21px">jmfriedt@rugged:˜/sdr$ </div>
<div class="a" style="left:708px;top:722px;width:10px;height:18px;background:#fff"></div>
<div class="a" style="left:0px;top:742px;width:1024px;height:26px;background:#dcdad5"></div>
<div class="a" style="left:0px;top:742px;width:1024px;height:1px;background:#fff"></div>
<div class="a" style="left:0px;top:741px;width:1024px;height:1px;background:#000"></div>
<div class="a" style="left:0px;top:742px;width:1024px;height:2px;background:#fff"></div>
<div class="a" style="left:0px;top:767px;width:1024px;height:1px;background:#000"></div>
<div class="a" style="left:0px;top:743px;width:53px;height:24px;background:#dcdad5;border-right:1px solid #000;box-shadow:inset 1px 1px 0 #fff"></div>
<svg class="a" style="left:1px;top:744px" width="51" height="22"><path d="M4,20 L10,11 L14,17 L20,8 L27,18 L31,14 L36,20 Z" fill="#c8ccdc" opacity="0.7"/></svg>
<div class="t" style="left:2.50px;top:749.42px;font-size:12.5px;color:#1c1c1c;font-weight:bold;transform:scaleX(0.80);transform-origin:0 0">debıan</div>
<svg class="a" style="left:33px;top:744px" width="19" height="21"><path d="M8.5,19 C4,16 2.5,11 3.5,7.5 C5,3 9.5,1.5 13,2.5 C16.5,3.5 17.5,7.5 16.5,10 C15.5,12.5 12,13 10.5,11.5 C9,10 10,8 11.5,8.2" stroke="#d70a53" stroke-width="1.5" fill="none"/></svg>
<div class="a" style="left:21px;top:749px;width:2px;height:2px;background:#d70a53"></div>
<div class="a" style="left:53px;top:743px;width:25px;height:24px;background:#dcdad5;border-right:1px solid #000;box-shadow:inset 1px 1px 0 #fff"></div>
<div class="a" style="left:56px;top:761px;width:10px;height:2px;background:#000"></div>
<div class="a" style="left:78px;top:743px;width:25px;height:24px;background:#dcdad5;border-right:1px solid #000;box-shadow:inset 1px 1px 0 #fff"></div>
<div class="a" style="left:81px;top:747px;width:10px;height:9px;background:#dcdad5;border:1px solid #000;border-top-width:2px;box-shadow:inset 1px 1px 0 #fff"></div>
<div class="a" style="left:85px;top:751px;width:10px;height:9px;background:#dcdad5;border:1px solid #000;border-top-width:2px;box-shadow:inset 1px 1px 0 #fff"></div>
<div class="a" style="left:89px;top:755px;width:10px;height:9px;background:#dcdad5;border:1px solid #000;border-top-width:2px;box-shadow:inset 1px 1px 0 #fff"></div>
<div class="a" style="left:103px;top:743px;width:3px;height:24px;background:#dcdad5"></div>
<div class="a" style="left:106px;top:743px;width:26px;height:24px;background:#dcdad5;border-right:1px solid #000;box-shadow:inset 1px 1px 0 #fff"></div>
<svg class="a" style="left:111px;top:747px" width="16" height="17"><defs><linearGradient id="mg3" x1="0" y1="0" x2="1" y2="1"><stop offset="0" stop-color="#4a6cc8"/><stop offset="1" stop-color="#dde6f6"/></linearGradient></defs><rect x="1.5" y="0.5" width="12" height="11" rx="1" fill="#e4e4e4" stroke="#6a6a6a"/><rect x="3" y="2" width="9" height="7.5" fill="url(#mg3)"/><rect x="5" y="11.5" width="5" height="1.5" fill="#303030"/><path d="M2.5,13 H12.5 L15,16.5 H0 Z" fill="#9a9a9a" stroke="#505050" stroke-width="0.8"/></svg>
<div class="a" style="left:132px;top:743px;width:25px;height:24px;background:#dcdad5;border-right:1px solid #000;box-shadow:inset 1px 1px 0 #fff"></div>
<svg class="a" style="left:137px;top:746px" width="16" height="17"><defs><radialGradient id="gl" cx="0.45" cy="0.55" r="0.6"><stop offset="0" stop-color="#b8c4ff"/><stop offset="0.5" stop-color="#4a5ae8"/><stop offset="1" stop-color="#1c24b0"/></radialGradient></defs><circle cx="7.5" cy="9.5" r="6.5" fill="url(#gl)"/><path d="M2,12 C5,14 10,14 13,11" stroke="#e8ecff" stroke-width="1.2" fill="none"/><path d="M5,4 C8,0 14,1 14,5" stroke="#ffffff" stroke-width="1.5" fill="none"/></svg>
<div class="a" style="left:157px;top:743px;width:5px;height:24px;background:#dcdad5"></div>
<div class="a" style="left:162px;top:743px;width:24px;height:24px;background:#dcdad5;border-right:1px solid #000;box-shadow:inset 1px 1px 0 #fff"></div>
<div class="t" style="left:170.00px;top:746.61px;font-size:17px;">1</div>
<div class="a" style="left:186px;top:743px;width:26px;height:24px;background:#c6c0b6;border-top:1px solid #000;border-left:1px solid #000;box-shadow:inset 1px 1px 0 #8a8880"></div>
<div class="t" style="left:195.50px;top:746.61px;font-size:17px;">2</div>
<div class="a" style="left:212px;top:743px;width:25px;height:24px;background:#dcdad5;border-right:1px solid #000;box-shadow:inset 1px 1px 0 #fff"></div>
<div class="t" style="left:220.00px;top:746.61px;font-size:17px;">3</div>
<div class="a" style="left:237px;top:743px;width:25px;height:24px;background:#dcdad5;border-right:1px solid #000;box-shadow:inset 1px 1px 0 #fff"></div>
<div class="t" style="left:245.00px;top:746.61px;font-size:17px;">4</div>
<div class="a" style="left:262px;top:743px;width:4px;height:24px;background:#dcdad5"></div>
<div class="a" style="left:266px;top:743px;width:119px;height:24px;background:#c6c0b6;border-top:1px solid #000;border-left:1px solid #000;box-shadow:inset 1px 1px 0 #8a8880"></div>
<svg class="a" style="left:270px;top:749px" width="16" height="17"><defs><linearGradient id="mg4" x1="0" y1="0" x2="1" y2="1"><stop offset="0" stop-color="#4a6cc8"/><stop offset="1" stop-color="#dde6f6"/></linearGradient></defs><rect x="1.5" y="0.5" width="12" height="11" rx="1" fill="#e4e4e4" stroke="#6a6a6a"/><rect x="3" y="2" width="9" height="7.5" fill="url(#mg4)"/><rect x="5" y="11.5" width="5" height="1.5" fill="#303030"/><path d="M2.5,13 H12.5 L15,16.5 H0 Z" fill="#9a9a9a" stroke="#505050" stroke-width="0.8"/></svg>
<div class="t" style="left:286.92px;top:748.21px;font-size:17px;letter-spacing:0.32px;">jmfriedt@...</div>
<div class="a" style="left:385px;top:743px;width:117px;height:24px;background:#c6c0b6;border-top:1px solid #000;border-left:1px solid #000;box-shadow:inset 1px 1px 0 #8a8880"></div>
<svg class="a" style="left:389px;top:749px" width="16" height="17"><defs><linearGradient id="mg5" x1="0" y1="0" x2="1" y2="1"><stop offset="0" stop-color="#4a6cc8"/><stop offset="1" stop-color="#dde6f6"/></linearGradient></defs><rect x="1.5" y="0.5" width="12" height="11" rx="1" fill="#e4e4e4" stroke="#6a6a6a"/><rect x="3" y="2" width="9" height="7.5" fill="url(#mg5)"/><rect x="5" y="11.5" width="5" height="1.5" fill="#303030"/><path d="M2.5,13 H12.5 L15,16.5 H0 Z" fill="#9a9a9a" stroke="#505050" stroke-width="0.8"/></svg>
<div class="t" style="left:405.92px;top:748.21px;font-size:17px;letter-spacing:0.32px;">jmfriedt@...</div>
<div class="a" style="left:502px;top:743px;width:119px;height:24px;background:#dcdad5;border-right:1px solid #000;box-shadow:inset 1px 1px 0 #fff"></div>
<svg class="a" style="left:506px;top:749px" width="16" height="17"><defs><linearGradient id="mg6" x1="0" y1="0" x2="1" y2="1"><stop offset="0" stop-color="#4a6cc8"/><stop offset="1" stop-color="#dde6f6"/></linearGradient></defs><rect x="1.5" y="0.5" width="12" height="11" rx="1" fill="#e4e4e4" stroke="#6a6a6a"/><rect x="3" y="2" width="9" height="7.5" fill="url(#mg6)"/><rect x="5" y="11.5" width="5" height="1.5" fill="#303030"/><path d="M2.5,13 H12.5 L15,16.5 H0 Z" fill="#9a9a9a" stroke="#505050" stroke-width="0.8"/></svg>
<div class="t" style="left:522.92px;top:748.21px;font-size:17px;letter-spacing:0.32px;">jmfriedt@...</div>
<div class="a" style="left:621px;top:743px;width:118px;height:24px;background:#dcdad5;border-right:1px solid #000;box-shadow:inset 1px 1px 0 #fff"></div>
<svg class="a" style="left:623px;top:750px" width="16" height="13"><path d="M1,1 L4.6,1 L15.2,12 L11.4,12 Z" fill="#ff0000"/><path d="M1.6,11.6 L13.8,1.4" stroke="#ff0000" stroke-width="1.3"/></svg>
<div class="t" style="left:642.70px;top:746.41px;font-size:17px;">Top Block</div>
<div class="a" style="left:739px;top:743px;width:118px;height:24px;background:#c6c0b6;border-top:1px solid #000;border-left:1px solid #000;box-shadow:inset 1px 1px 0 #8a8880"></div>
<svg class="a" style="left:743px;top:749px" width="16" height="17"><defs><linearGradient id="mg7" x1="0" y1="0" x2="1" y2="1"><stop offset="0" stop-color="#4a6cc8"/><stop offset="1" stop-color="#dde6f6"/></linearGradient></defs><rect x="1.5" y="0.5" width="12" height="11" rx="1" fill="#e4e4e4" stroke="#6a6a6a"/><rect x="3" y="2" width="9" height="7.5" fill="url(#mg7)"/><rect x="5" y="11.5" width="5" height="1.5" fill="#303030"/><path d="M2.5,13 H12.5 L15,16.5 H0 Z" fill="#9a9a9a" stroke="#505050" stroke-width="0.8"/></svg>
<div class="t" style="left:759.92px;top:748.21px;font-size:17px;letter-spacing:0.32px;">jmfriedt@...</div>
<div class="a" style="left:857px;top:743px;width:1px;height:24px;background:#fff"></div>
<svg class="a" style="left:866px;top:745px" width="20" height="20"><rect width="20" height="20" fill="#1c1c3c"/><path d="M0,3 L2,3.5 L3,4.5 L4,3 L6,2 L9,2 L10,0.5 L11,2 L13,4 L15,6.5 L17,6.5 L20,5 L20,20 L0,20 Z" fill="#00ff00"/><path d="M1,19.5 H12" stroke="#ff0000" stroke-width="1" stroke-dasharray="1.5,1"/></svg>
<svg class="a" style="left:889px;top:749px" width="16" height="12"><rect x="1.5" y="1.5" width="12" height="8" fill="#00ff00" stroke="#000" stroke-width="1.4"/><path d="M2,2 L7.5,7 L13,2 M2,9 L5.5,5.5 M13,9 L9.5,5.5" stroke="#000" stroke-width="0.9" fill="none"/><path d="M15,3 V11 H3" stroke="#555" stroke-width="1" fill="none"/></svg>
<div class="a" style="left:908px;top:745px;width:114px;height:20px;background:#181838"></div>
<div class="t" style="left:910.00px;top:746.21px;font-size:18px;color:#e8cc90;font-family:'Liberation Mono',monospace;transform:scaleX(0.9259);transform-origin:0 0">09:31:06 PM</div>
</body></html>
